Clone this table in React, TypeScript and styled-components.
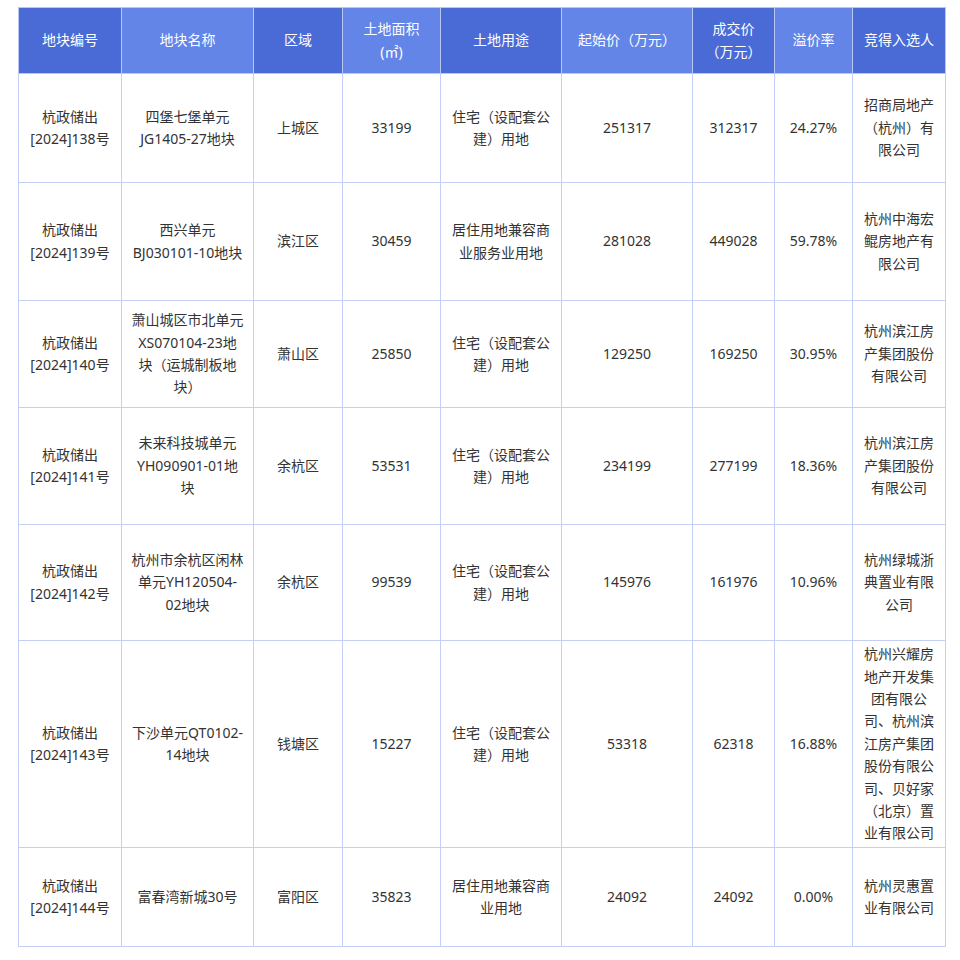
import React from "react";
import styled, { createGlobalStyle } from "styled-components";

const GlobalStyle = createGlobalStyle`
  html, body {
    margin: 0;
    padding: 0;
    background: #ffffff;
  }
  body {
    font-family: "Noto Sans", "Noto Sans CJK SC", sans-serif;
    color: #333333;
  }
`;

const Page = styled.div`
  padding: 7px 0 0 18px;
`;

const Table = styled.table`
  border-collapse: collapse;
  table-layout: fixed;
  width: 927px;
  font-size: 14px;
  line-height: 22.4px;
  border: 1px solid #c3cff4;
`;

const HeadCell = styled.th<{ $dark: boolean }>`
  background: ${(p) => (p.$dark ? "#4a6bd5" : "#6385e8")};
  color: #ffffff;
  font-weight: 400;
  text-align: center;
  vertical-align: middle;
  padding: 0 4px;
  border: 1px solid #b9c8f2;
  white-space: pre;
`;

const Row = styled.tr<{ $h: number }>`
  height: ${(p) => p.$h}px;
`;

const Cell = styled.td`
  text-align: center;
  vertical-align: middle;
  padding: 0 4px;
  border: 1px solid #c3cff4;
  color: #333333;
  white-space: pre;
`;

const columns: { title: string; width: number }[] = [
  { title: "地块编号", width: 103 },
  { title: "地块名称", width: 132 },
  { title: "区域", width: 89 },
  { title: "土地面积\n(㎡)", width: 98 },
  { title: "土地用途", width: 121 },
  { title: "起始价（万元）", width: 131 },
  { title: "成交价\n（万元）", width: 82 },
  { title: "溢价率", width: 78 },
  { title: "竞得入选人", width: 93 },
];

const RES = "住宅（设配套公\n建）用地";

const rows: { h: number; cells: string[] }[] = [
  {
    h: 109,
    cells: [
      "杭政储出\n[2024]138号",
      "四堡七堡单元\nJG1405-27地块",
      "上城区",
      "33199",
      RES,
      "251317",
      "312317",
      "24.27%",
      "招商局地产\n（杭州）有\n限公司",
    ],
  },
  {
    h: 118,
    cells: [
      "杭政储出\n[2024]139号",
      "西兴单元\nBJ030101-10地块",
      "滨江区",
      "30459",
      "居住用地兼容商\n业服务业用地",
      "281028",
      "449028",
      "59.78%",
      "杭州中海宏\n鲲房地产有\n限公司",
    ],
  },
  {
    h: 107,
    cells: [
      "杭政储出\n[2024]140号",
      "萧山城区市北单元\nXS070104-23地\n块（运城制板地\n块）",
      "萧山区",
      "25850",
      RES,
      "129250",
      "169250",
      "30.95%",
      "杭州滨江房\n产集团股份\n有限公司",
    ],
  },
  {
    h: 117,
    cells: [
      "杭政储出\n[2024]141号",
      "未来科技城单元\nYH090901-01地\n块",
      "余杭区",
      "53531",
      RES,
      "234199",
      "277199",
      "18.36%",
      "杭州滨江房\n产集团股份\n有限公司",
    ],
  },
  {
    h: 116,
    cells: [
      "杭政储出\n[2024]142号",
      "杭州市余杭区闲林\n单元YH120504-\n02地块",
      "余杭区",
      "99539",
      RES,
      "145976",
      "161976",
      "10.96%",
      "杭州绿城浙\n典置业有限\n公司",
    ],
  },
  {
    h: 207,
    cells: [
      "杭政储出\n[2024]143号",
      "下沙单元QT0102-\n14地块",
      "钱塘区",
      "15227",
      RES,
      "53318",
      "62318",
      "16.88%",
      "杭州兴耀房\n地产开发集\n团有限公\n司、杭州滨\n江房产集团\n股份有限公\n司、贝好家\n（北京）置\n业有限公司",
    ],
  },
  {
    h: 99,
    cells: [
      "杭政储出\n[2024]144号",
      "富春湾新城30号",
      "富阳区",
      "35823",
      "居住用地兼容商\n业用地",
      "24092",
      "24092",
      "0.00%",
      "杭州灵惠置\n业有限公司",
    ],
  },
];

export default function App() {
  return (
    <>
      <GlobalStyle />
      <Page>
        <Table>
          <colgroup>
            {columns.map((c, i) => (
              <col key={i} style={{ width: c.width }} />
            ))}
          </colgroup>
          <thead>
            <Row $h={66}>
              {columns.map((c, i) => (
                <HeadCell key={i} $dark={i % 2 === 0}>
                  {c.title}
                </HeadCell>
              ))}
            </Row>
          </thead>
          <tbody>
            {rows.map((r, ri) => (
              <Row key={ri} $h={r.h}>
                {r.cells.map((t, ci) => (
                  <Cell key={ci}>{t}</Cell>
                ))}
              </Row>
            ))}
          </tbody>
        </Table>
      </Page>
    </>
  );
}
